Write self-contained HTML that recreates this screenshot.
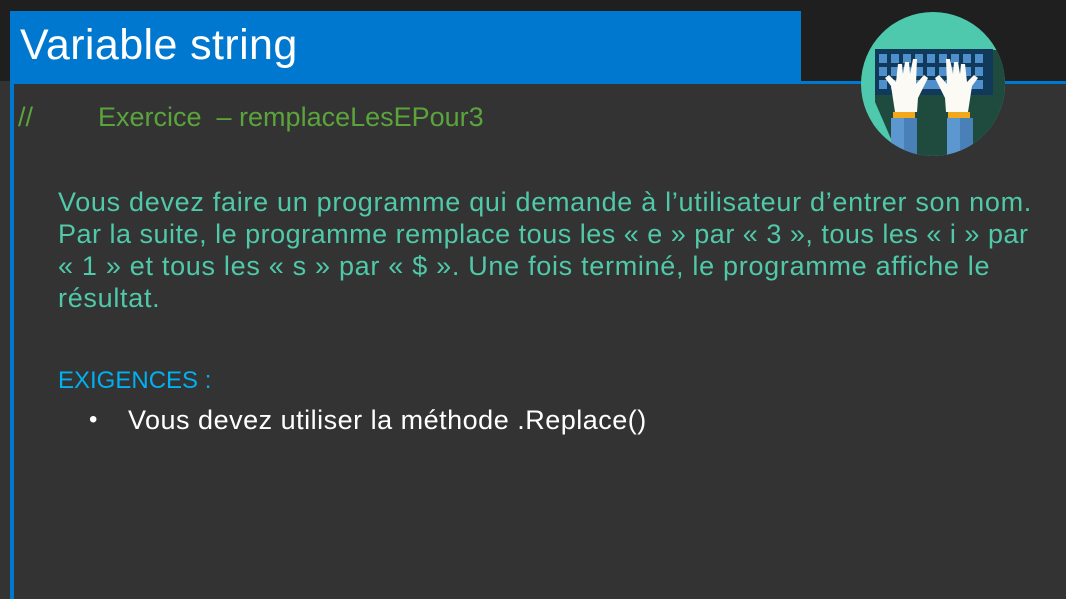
<!DOCTYPE html>
<html><head><meta charset="utf-8"><style>
body{margin:0;width:1066px;height:599px;overflow:hidden;background:#333;position:relative;font-family:"Liberation Sans",sans-serif}
.t{position:absolute;white-space:nowrap;line-height:1}
.g{color:#4fc9a8;font-size:27px;letter-spacing:.7px}
</style></head><body>
<div style="position:absolute;left:0;top:0;width:1066px;height:81px;background:#1f1f1f"></div>
<div style="position:absolute;left:10px;top:81px;width:1056px;height:3px;background:#0078d0"></div>
<div style="position:absolute;left:10px;top:11px;width:791px;height:70px;background:#0078d0"></div>
<div style="position:absolute;left:10px;top:84px;width:4px;height:515px;background:#0078d0"></div>
<div class="t" style="left:20px;top:24px;font-size:43px;letter-spacing:.4px;color:#fff">Variable string</div>
<div class="t" style="left:18px;top:104px;font-size:27px;color:#5ba43c">//</div>
<div class="t" style="left:98px;top:104px;font-size:27px;color:#5ba43c">Exercice&nbsp; – remplaceLesEPour3</div>
<div class="t g" style="left:58px;top:189px">Vous devez faire un programme qui demande à l’utilisateur d’entrer son nom.</div>
<div class="t g" style="left:58px;top:221px;letter-spacing:.5px">Par la suite, le programme remplace tous les « e » par « 3 », tous les « i » par</div>
<div class="t g" style="left:58px;top:253px">« 1 » et tous les « s » par « $ ». Une fois terminé, le programme affiche le</div>
<div class="t g" style="left:58px;top:285px">résultat.</div>
<div class="t" style="left:58px;top:369px;font-size:24px;color:#00b0f0">EXIGENCES :</div>
<div class="t" style="left:89px;top:408px;font-size:24px;color:#fff">•</div>
<div class="t" style="left:128px;top:407px;font-size:27px;letter-spacing:.5px;color:#fff">Vous devez utiliser la méthode .Replace()</div>
<svg style="position:absolute;left:861px;top:12px" width="144" height="144" viewBox="0 0 144 144">
<defs><clipPath id="c"><circle cx="72" cy="72" r="72"/></clipPath></defs>
<circle cx="72" cy="72" r="72" fill="#4fc9ae"/>
<g clip-path="url(#c)">
<polygon points="14,38 148,38 160,150 40,150 14,90" fill="#1f4b3f"/>
<rect x="14" y="37" width="118" height="46" fill="#113a5a"/>
<g fill="#4f8fcc">
<rect x="18" y="42" width="8" height="9"/><rect x="30" y="42" width="8" height="9"/><rect x="42" y="42" width="8" height="9"/><rect x="54" y="42" width="8" height="9"/><rect x="66" y="42" width="8" height="9"/><rect x="78" y="42" width="8" height="9"/><rect x="90" y="42" width="8" height="9"/><rect x="102" y="42" width="8" height="9"/><rect x="114" y="42" width="8" height="9"/>
<rect x="18" y="55" width="8" height="9"/><rect x="30" y="55" width="8" height="9"/><rect x="42" y="55" width="8" height="9"/><rect x="54" y="55" width="8" height="9"/><rect x="66" y="55" width="8" height="9"/><rect x="78" y="55" width="8" height="9"/><rect x="90" y="55" width="8" height="9"/><rect x="102" y="55" width="8" height="9"/><rect x="114" y="55" width="8" height="9"/>
<rect x="18" y="68" width="8" height="9"/><rect x="30" y="68" width="50" height="9"/><rect x="84" y="68" width="8" height="9"/><rect x="96" y="68" width="8" height="9"/><rect x="108" y="68" width="14" height="9"/>
</g>
<path d="M34,100 L30,74 L24,66 L28,63 L35,70 L37,52 L41,52 L42,62 L44,50 L48,50 L49,62 L52,47 L56,47 L55,72 L63,63 L67,66 L57,86 L56,100 Z" fill="#fbfaf5"/>
<path d="M107,100 L111,74 L117,66 L113,63 L106,70 L104,52 L100,52 L99,62 L97,50 L93,50 L92,62 L89,47 L85,47 L86,72 L78,63 L74,66 L84,86 L85,100 Z" fill="#fbfaf5"/>
<rect x="32" y="100" width="22" height="6" fill="#f3a81c"/>
<rect x="87" y="100" width="22" height="6" fill="#f3a81c"/>
<rect x="30" y="106" width="26" height="45" fill="#5d97cf"/><rect x="43" y="106" width="13" height="45" fill="#4a80b8"/>
<rect x="86" y="106" width="26" height="45" fill="#5d97cf"/><rect x="99" y="106" width="13" height="45" fill="#4a80b8"/>
</g>
</svg>
</body></html>
